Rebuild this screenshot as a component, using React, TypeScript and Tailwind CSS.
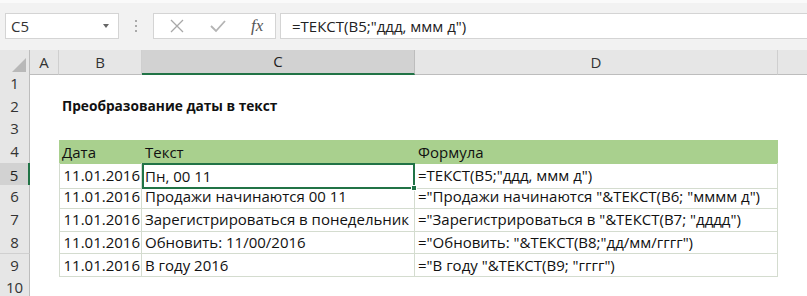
const font = { fontFamily: '"Open Sans", "Noto Sans", sans-serif' };

const COLS = ["30px", "29px", "83px", "273px", "363px", "1fr"];

const rows = [
    { date: "11.01.2016", text: "Пн, 00 11", formula: "=ТЕКСТ(B5;\"ддд, ммм д\")" },
    { date: "11.01.2016", text: "Продажи начинаются 00 11", formula: "=\"Продажи начинаются \"&ТЕКСТ(B6; \"мммм д\")" },
    { date: "11.01.2016", text: "Зарегистрироваться в понедельник", formula: "=\"Зарегистрироваться в \"&ТЕКСТ(B7; \"дддд\")" },
    { date: "11.01.2016", text: "Обновить: 11/00/2016", formula: "=\"Обновить: \"&ТЕКСТ(B8;\"дд/мм/гггг\")" },
    { date: "11.01.2016", text: "В году 2016", formula: "=\"В году \"&ТЕКСТ(B9; \"гггг\")" },
];

const RowNum = ({ n, active }: { n: number; active?: boolean }) => (
    <div
        className={
            active
                ? "flex items-center justify-center bg-[#d2d2d2] border-r-2 border-r-[#217346] border-b border-b-[#c8c8c8] text-[15px] text-[#222]"
                : "flex items-center justify-center bg-[#e6e6e6] border-r border-r-[#bdbdbd] border-b border-b-[#d0d0d0] text-[15px] text-[#333]"
        }
    >
        {n}
    </div>
);

const Toolbar = () => (
    <div className="h-[50px] bg-[#f2f2f2] border-t-[3px] border-t-[#fafafa] relative">
        <div className="flex items-center pt-[10px]">
            {/* name box */}
            <div className="ml-[5px] w-[114px] h-[26px] bg-white border border-[#d4d4d4] flex items-center justify-between pl-[5px] pr-[9px]">
                <span className="text-[15px] text-[#333]">C5</span>
                <svg width="6" height="4" viewBox="0 0 6 4">
                    <path d="M0 0 L6 0 L3 4 Z" fill="#666" />
                </svg>
            </div>
            {/* dots */}
            <div className="w-[34px] flex flex-col items-center gap-[3px]">
                <span className="w-[2px] h-[2px] bg-[#aaa]" />
                <span className="w-[2px] h-[2px] bg-[#aaa]" />
                <span className="w-[2px] h-[2px] bg-[#aaa]" />
            </div>
            {/* buttons */}
            <div className="w-[123px] h-[26px] bg-white border border-[#d4d4d4] flex items-center">
                <svg width="14" height="14" viewBox="0 0 14 14" className="ml-[16px]">
                    <path d="M1 1 L13 13 M13 1 L1 13" stroke="#a8a8a8" strokeWidth="1.3" fill="none" />
                </svg>
                <svg width="16" height="14" viewBox="0 0 16 14" className="ml-[26px]">
                    <path d="M1 7 L6 12 L15 2" stroke="#b4b4b4" strokeWidth="1.8" fill="none" />
                </svg>
                <span
                    className="ml-[25px] text-[17px] italic text-[#555]"
                    style={{ fontFamily: '"Liberation Serif", serif' }}
                >
                    fx
                </span>
            </div>
            {/* formula input */}
            <div className="ml-[4px] flex-1 h-[26px] bg-white border border-[#d4d4d4] border-r-0 flex items-center pl-[11px]">
                <span className="text-[15px] text-[#222]">=ТЕКСТ(B5;"ддд, ммм д")</span>
            </div>
        </div>
    </div>
);

const ColHeaders = () => (
    <div className="grid h-[22px]" style={{ gridTemplateColumns: COLS.join(" ") }}>
        <div className="bg-[#e6e6e6] border-r border-r-[#bdbdbd] border-b border-b-[#bdbdbd] flex items-end justify-end pr-[3px] pb-[2px]">
            <svg width="14" height="14" viewBox="0 0 14 14">
                <path d="M14 0 L14 14 L0 14 Z" fill="#b8b8b8" />
            </svg>
        </div>
        <div className="bg-[#e6e6e6] border-r border-r-[#cfcfcf] border-b border-b-[#bdbdbd] flex items-center justify-center text-[15px] text-[#333]">A</div>
        <div className="bg-[#e6e6e6] border-r border-r-[#cfcfcf] border-b border-b-[#bdbdbd] flex items-center justify-center text-[15px] text-[#333]">B</div>
        <div className="bg-[#d2d2d2] border-r border-r-[#bdbdbd] border-b-2 border-b-[#217346] flex items-center justify-center text-[15px] text-[#222]">C</div>
        <div className="bg-[#e6e6e6] border-r border-r-[#cfcfcf] border-b border-b-[#bdbdbd] flex items-center justify-center text-[15px] text-[#333]">D</div>
        <div className="bg-[#e6e6e6] border-b border-b-[#bdbdbd]" />
    </div>
);

const Line = ({ n, children }: { n: number; children?: React.ReactNode }) => (
    <div className="grid h-[22.7px]" style={{ gridTemplateColumns: COLS.join(" ") }}>
        <RowNum n={n} active={n === 5} />
        <div />
        {children ?? (
            <>
                <div />
                <div />
                <div />
            </>
        )}
        <div />
    </div>
);

export default function App() {
    return (
        <div className="w-[807px] h-[296px] overflow-hidden bg-white text-[#111]" style={font}>
            <Toolbar />
            <ColHeaders />
            <Line n={1} />
            <Line n={2}>
                <div className="col-span-3 flex items-center pl-[3px] text-[13.7px] font-bold whitespace-nowrap">
                    Преобразование даты в текст
                </div>
            </Line>
            <Line n={3} />
            <Line n={4}>
                <div className="bg-[#a9d08e] flex items-center pl-[3px] text-[15px]">Дата</div>
                <div className="bg-[#a9d08e] flex items-center pl-[3px] text-[15px]">Текст</div>
                <div className="bg-[#a9d08e] flex items-center pl-[3px] text-[15px]">Формула</div>
            </Line>
            {rows.map((r, i) => (
                <Line key={i} n={i + 5}>
                    <div className="border-l border-l-[#d4dccf] border-r border-r-[#d4dccf] border-b border-b-[#d4dccf] flex items-center justify-end pr-[1px] text-[15px] whitespace-nowrap">
                        {r.date}
                    </div>
                    <div
                        className={
                            i === 0
                                ? "relative border-2 border-[#217346] flex items-center pl-[1px] text-[15px] whitespace-nowrap"
                                : "border-r border-r-[#d4dccf] border-b border-b-[#d4dccf] flex items-center pl-[3px] text-[15px] whitespace-nowrap"
                        }
                    >
                        {r.text}
                        {i === 0 && (
                            <span className="absolute right-[-4px] bottom-[-4px] w-[6px] h-[6px] bg-[#217346] border border-white" />
                        )}
                    </div>
                    <div className="border-r border-r-[#d4dccf] border-b border-b-[#d4dccf] flex items-center pl-[3px] text-[15px] whitespace-nowrap">
                        {r.formula}
                    </div>
                </Line>
            ))}
            <Line n={10} />
        </div>
    );
}
